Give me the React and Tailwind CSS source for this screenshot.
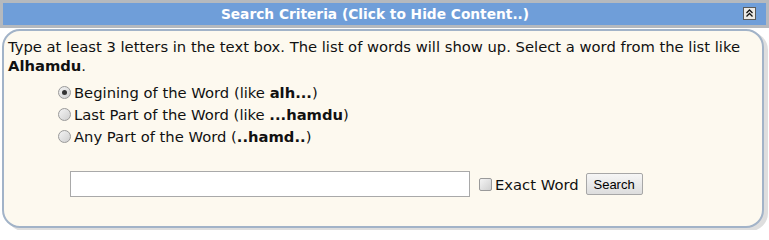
import { useState } from 'react';

const font = { fontFamily: "Tahoma, 'DejaVu Sans', sans-serif" };

function Radio({ checked, onClick, children }) {
  return (
    <label className="flex items-center h-[22px] cursor-pointer" onClick={onClick}>
      <span className="w-[13px] h-[13px] rounded-full border border-[#9a9a9a] bg-gradient-to-br from-[#f4f4f4] to-[#cfcfcf] flex items-center justify-center mr-[3px]">
        {checked && <span className="w-[5px] h-[5px] rounded-full bg-[#333]" />}
      </span>
      <span>{children}</span>
    </label>
  );
}

function CollapseIcon() {
  return (
    <svg width="13" height="13" viewBox="0 0 13 13">
      <rect x="0.5" y="0.5" width="12" height="12" fill="#eceae6" stroke="#5a5a5a" />
      <path d="M3.5 6 L6.5 3 L9.5 6 M3.5 9.5 L6.5 6.5 L9.5 9.5" fill="none" stroke="#111" strokeWidth="1.3" />
    </svg>
  );
}

export default function App() {
  const [mode, setMode] = useState('begin');
  const [open, setOpen] = useState(true);

  return (
    <div className="w-[769px] h-[230px] bg-white overflow-hidden" style={font}>
      <div
        className="h-[28px] border-[3px] border-[#b5b9be] bg-[#6f9ed9] flex items-center cursor-pointer"
        onClick={() => setOpen(!open)}
      >
        <div className="flex-1 text-center text-white font-bold text-[13.75px] pl-[4px]">
          Search Criteria (Click to Hide Content..)
        </div>
        <div className="mr-[10px] mb-[2px] flex">
          <CollapseIcon />
        </div>
      </div>

      {open && (
        <div className="ml-[2px] mt-[1px] w-[762px] h-[199px] rounded-[18px] border-2 border-[#a2b3c8] bg-[#fdf9ef] shadow-[4px_3px_0_#dedede] text-[14.75px] text-[#111] pt-[6px] pl-[4px] leading-[19px]">
          <p>
            Type at least 3 letters in the text box. The list of words will show up. Select a word from the list like{' '}
            <b>Alhamdu</b>.
          </p>

          <div className="pl-[50px] pt-[6px]">
            <Radio checked={mode === 'begin'} onClick={() => setMode('begin')}>
              Begining of the Word (like <b>alh...</b>)
            </Radio>
            <Radio checked={mode === 'last'} onClick={() => setMode('last')}>
              Last Part of the Word (like <b>...hamdu</b>)
            </Radio>
            <Radio checked={mode === 'any'} onClick={() => setMode('any')}>
              Any Part of the Word (<b>..hamd..</b>)
            </Radio>
          </div>

          <div className="flex items-center pl-[62px] mt-[24px]">
            <input type="text" className="w-[400px] h-[26px] border border-[#a9a9a9] bg-white outline-none px-1" />
            <span className="ml-[9px] w-[13px] h-[13px] rounded-[2px] border border-[#9a9a9a] bg-gradient-to-br from-[#f4f4f4] to-[#d0d0d0]" />
            <span className="ml-[3px]">Exact Word</span>
            <button
              className="ml-[7px] h-[22px] w-[57px] border border-[#a7a7a7] rounded-[2px] bg-gradient-to-b from-[#f6f6f6] to-[#dddddd] text-[13px] text-black"
              style={{ fontFamily: "'Liberation Sans', Arial, sans-serif" }}
            >
              Search
            </button>
          </div>
        </div>
      )}
    </div>
  );
}
